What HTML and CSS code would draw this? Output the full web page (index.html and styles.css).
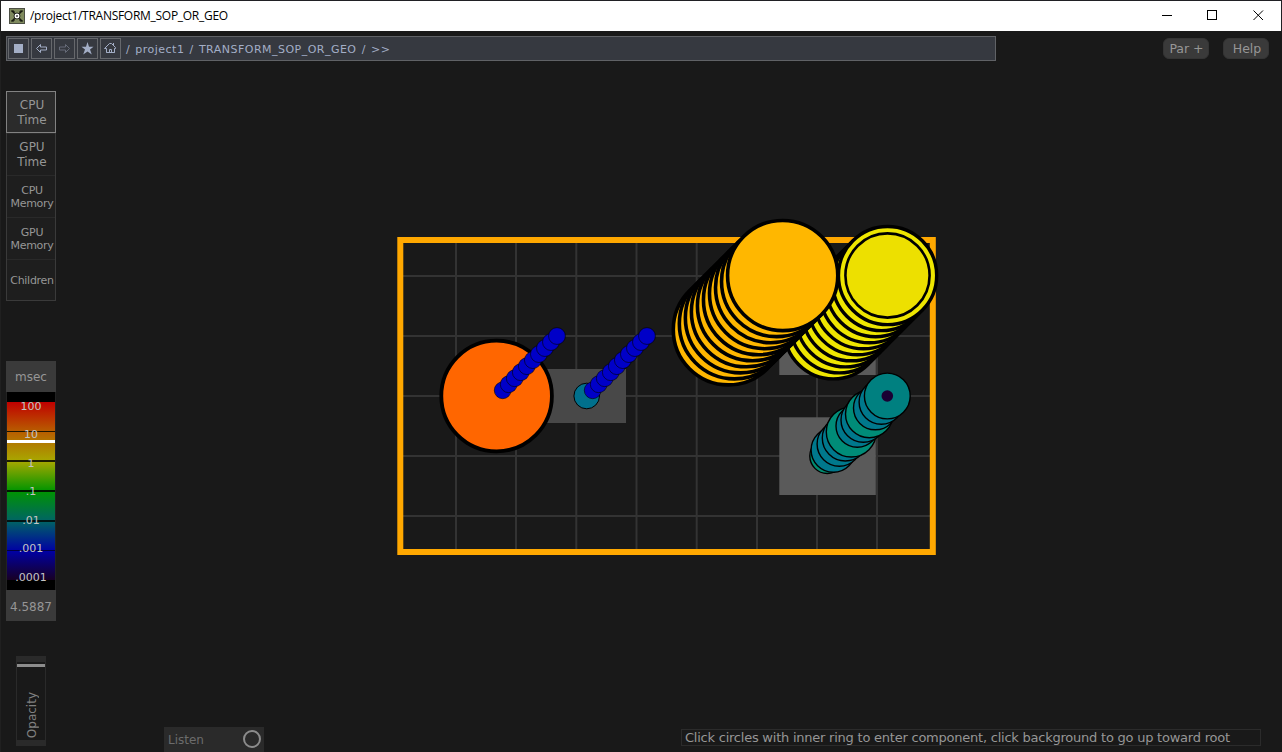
FILE: index.html
```html
<!DOCTYPE html>
<html lang="en">
<head>
    <meta charset="UTF-8">
    <title>/project1/TRANSFORM_SOP_OR_GEO</title>
    <link rel="stylesheet" href="styles.css">
</head>
<body>
    <header class="titlebar">
        <svg class="app-icon" width="16" height="16" viewBox="0 0 16 16">
            <rect x="0.5" y="0.5" width="15" height="15" fill="#7f8a5e" stroke="#4c4f44"/>
            <path d="M3 3l10 10M13 3L3 13" stroke="#14160f" stroke-width="1.4"/>
            <path d="M2 3h3v2M14 3h-3v2M2 13h3v-2M14 13h-3v-2" fill="none" stroke="#14160f"/>
            <circle cx="8" cy="8" r="3" fill="#fff" stroke="#2a2c24"/>
            <circle cx="8" cy="8" r="1" fill="#444"/>
        </svg>
        <span class="title">/project1/TRANSFORM_SOP_OR_GEO</span>
        <svg class="window-buttons" width="106" height="12" viewBox="0 0 106 12" fill="none" stroke="#000">
            <path d="M0 5.500h10"/>
            <rect x="45.5" y="0.5" width="9" height="9"/>
            <path d="M91.500 0.500l9.500 9.500M101 0.500l-9.500 9.500"/>
        </svg>
    </header>

    <div class="toolbar">
        <div class="pathbar">
            <button class="tool"><svg width="19" height="19" viewBox="0 0 19 19"><rect x="5" y="5" width="9" height="9" fill="#a3aec6"/></svg></button>
            <button class="tool"><svg width="19" height="19" viewBox="0 0 19 19"><path d="M4.500 9.500l4-4v2.500h6v3h-6v2.500z" fill="none" stroke="#a3aec6"/></svg></button>
            <button class="tool"><svg width="19" height="19" viewBox="0 0 19 19"><path d="M14.500 9.500l-4-4v2.500h-6v3h6v2.500z" fill="none" stroke="#666b78"/></svg></button>
            <button class="tool"><svg width="19" height="19" viewBox="0 0 19 19"><path d="M9.500 3l1.500 4.800h4.500l-3.500 2.700 1.800 5-4.300-3-4.300 3 1.800-5-3.500-2.700h4.500z" fill="#a3aec6"/></svg></button>
            <button class="tool"><svg width="19" height="19" viewBox="0 0 19 19"><path d="M3.500 9.500l5-5h2l4 4v1h-1v4h-3v-3h-2v3h-3v-4zM12.500 4v3M5.500 13.500h8" fill="none" stroke="#a3aec6"/></svg></button>
            <span class="path">/ project1 / TRANSFORM_SOP_OR_GEO / &gt;&gt;</span>
        </div>
        <button class="pill">Par +</button>
        <button class="pill help">Help</button>
    </div>

    <div class="main">
        <aside class="sidebar">
            <div class="modes">
                <div class="mode active">CPU<br>Time</div>
                <div class="mode">GPU<br>Time</div>
                <div class="mode small">CPU<br>Memory</div>
                <div class="mode small">GPU<br>Memory</div>
                <div class="mode small">Children</div>
            </div>
            <div class="legend">
                <div class="unit">msec</div>
                <div class="scale">
                    <span>100</span>
                    <span>10</span>
                    <span>1</span>
                    <span>.1</span>
                    <span>.01</span>
                    <span>.001</span>
                    <span>.0001</span>
                    <div class="marker"></div>
                </div>
                <div class="value">4.5887</div>
            </div>
            <div class="opacity"><span>Opacity</span></div>
        </aside>

        <section class="content">
            <svg class="graph" width="556" height="350" viewBox="390 210 556 350">
                <path class="grid" d="M456 243v306M516 243v306M576.300 243v306M636.500 243v306M696.700 243v306M757 243v306M817 243v306M877 243v306M403 276h527M403 336h527M403 396h527M403 456h527M403 516h527"/>
                <rect class="frame" x="400.300" y="240" width="532.500" height="312"/>
                <rect x="530" y="369" width="96" height="54" fill="#484848"/>
                <rect x="779.300" y="350" width="96.500" height="25" fill="#5a5a5a"/>
                <rect x="779.300" y="417.300" width="96.500" height="77.700" fill="#5a5a5a"/>
                <g id="nodes"></g>
            </svg>
            <footer class="bottom">
                <div class="listen"><span>Listen</span><i class="knob"></i></div>
                <div class="status"><span>Click circles with inner ring to enter component, click background to go up toward root</span></div>
            </footer>
        </section>
    </div>

    <script>
        const nodes = document.getElementById('nodes');

        function circle(x, y, r, fill, line) {
            const c = document.createElementNS('http://www.w3.org/2000/svg', 'circle');
            c.setAttribute('cx', x);
            c.setAttribute('cy', y);
            c.setAttribute('r', r);
            c.setAttribute('fill', fill);
            c.setAttribute('stroke', '#000');
            c.setAttribute('stroke-width', line);
            nodes.appendChild(c);
        }

        // ten circles going up and to the right
        function stack(x, y, r, fill, line) {
            for (let i = 0; i < 10; i++) {
                circle(x + i * 6.03, y - i * 6.03, r, fill, line);
            }
        }

        circle(496.6, 396, 55.3, '#ff6600', 3.8);
        circle(586.7, 396, 12.8, '#00708c', 1);
        stack(502.7, 390.3, 8.4, '#0000c8', 0.6);
        stack(592.7, 390.3, 8.4, '#0000c8', 0.6);

        stack(833.3, 329.8, 49.1, '#eee600', 3.4);
        circle(887.5, 275.5, 42.1, '#ede000', 2.6);
        stack(728.4, 329.8, 55.1, '#ffb700', 3.6);

        const chain = [
            [17.5, '#008c70'], [22.2, '#00788c'], [22.2, '#00788c'], [23, '#00788c'],
            [25, '#008c78'], [21.3, '#00788c'], [22.3, '#00788c'], [23.8, '#008c78'],
            [21.8, '#00788c'], [22.2, '#00788c'], [22.9, '#008080']
        ];
        chain.forEach((item, i) => {
            circle(827.3 + i * 6, 456 - i * 6, item[0], item[1], 1.4);
        });
        circle(887.3, 396, 5.8, '#1a0033', 0);
    </script>
</body>
</html>
```
FILE: styles.css
```css
* {
    box-sizing: border-box;
}
body {
    margin: 0;
    height: 752px;
    overflow: hidden;
    background: #191919;
    color: #969696;
    font-family: 'DejaVu Sans', Verdana, sans-serif;
    font-size: 12px;
    border-left: 1px solid #202020;
    display: flex;
    flex-direction: column;
}
button {
    font-family: inherit;
    padding: 0;
}
svg {
    display: block;
}
.titlebar {
    height: 31px;
    background: #fff;
    border-top: 1px solid #202024;
    border-right: 1px solid #202024;
    display: flex;
    align-items: center;
    padding: 0 13px 1px 8px;
    color: #000;
    flex: none;
}
.title {
    font-family: 'Open Sans', 'Noto Sans', sans-serif;
    font-size: 12px;
    letter-spacing: -0.28px;
    margin-left: 5px;
    flex: 1;
}
.toolbar {
    height: 30px;
    padding: 5px 13px 0 5px;
    display: flex;
    flex: none;
}
.pathbar {
    width: 990px;
    height: 25px;
    background: #363940;
    border: 1px solid #606266;
    display: flex;
    align-items: center;
    gap: 2px;
    padding-left: 1px;
    color: #a3aec6;
    margin-right: auto;
}
.tool {
    width: 21px;
    height: 21px;
    background: #363940;
    border: 1px solid #66686c;
}
.path {
    font-size: 11px;
    letter-spacing: 0.48px;
    word-spacing: 1.2px;
    margin-left: 3px;
    padding-top: 1px;
    white-space: pre;
}
.pill {
    width: 46px;
    height: 21px;
    margin: 2px 0 0 14px;
    padding-left: 1px;
    border: 1px solid #343434;
    border-radius: 6px;
    background: #3a3a3a;
    color: #969696;
    font-size: 12.5px;
}
.help {
    padding-left: 2px;
}
.main {
    flex: 1;
    display: flex;
    padding-top: 30px;
}
.sidebar {
    width: 50px;
    margin-left: 5px;
    text-align: center;
    flex: none;
}
.modes {
    border: 1px solid #3a3a3a;
    height: 210px;
    background: #1e1e1e;
}
.mode {
    height: 42px;
    line-height: 15px;
    display: flex;
    align-items: center;
    justify-content: center;
    border-top: 1px solid #292929;
    padding-left: 2px;
}
.mode.active {
    background: #2b2b2b;
    border: 1px solid #828282;
    margin: -1px -1px 0;
    padding-top: 2px;
}
.mode.small {
    font-size: 11px;
    letter-spacing: -0.3px;
    line-height: 13px;
}
.legend {
    margin-top: 60px;
    height: 260px;
}
.unit, .value {
    height: 31px;
    line-height: 32px;
    background: #3a3a3a;
}
.value {
    line-height: 34px;
}
.scale {
    position: relative;
    height: 198px;
    border: solid #222;
    border-width: 0 1px;
    color: #c4c4c4;
    font-size: 11px;
    display: flex;
    flex-direction: column;
    background:
        linear-gradient(#1c1400, #1c1400) 0 39px / 100% 1px no-repeat,
        linear-gradient(#1c1c00, #1c1c00) 0 68px / 100% 2px no-repeat,
        linear-gradient(#001800, #001800) 0 98px / 100% 2px no-repeat,
        linear-gradient(#001414, #001414) 0 128px / 100% 2px no-repeat,
        linear-gradient(#000040, #000040) 0 158px / 100% 1px no-repeat,
        linear-gradient(#000 10px, #c00000 10px, #b85c00 39px, #a8a800 69px, #009400 99px, #006464 129px, #0000a4 159px, #180024 188px, #000 188px);
}
.scale span {
    flex: none;
    height: 28.5px;
    display: flex;
    align-items: center;
    justify-content: center;
}
.marker {
    position: absolute;
    left: 0;
    right: 0;
    top: 48px;
    height: 3px;
    background: #fff;
}
.opacity {
    width: 30px;
    height: 90px;
    margin: 35px 0 0 10px;
    border: 1px solid #2a2a2a;
    border-width: 6px 1px;
    color: #808080;
    background: linear-gradient(#8c8c8c, #8c8c8c) 0 2px / 100% 3px no-repeat #191919;
    display: flex;
    align-items: flex-end;
    justify-content: center;
}
.opacity span {
    writing-mode: vertical-rl;
    transform: rotate(180deg);
    margin: 0 0 2px 2px;
}
.content {
    flex: 1;
    display: flex;
    flex-direction: column;
    padding-top: 119px;
}
.graph {
    margin-left: 334px;
}
.grid {
    fill: none;
    stroke: #333;
    stroke-width: 2;
}
.frame {
    fill: none;
    stroke: #ffa800;
    stroke-width: 6;
}
.bottom {
    margin: auto 21px 0 108px;
    height: 25px;
    display: flex;
    justify-content: space-between;
}
.listen {
    width: 100px;
    height: 25px;
    padding: 0 3px 0 4px;
    background: #2a2a2a;
    color: #6c6c6c;
    display: flex;
    align-items: center;
    justify-content: space-between;
}
.knob {
    width: 18px;
    height: 18px;
    margin-top: -1px;
    border: 2px solid #8c8c8c;
    border-radius: 50%;
}
.status {
    width: 580px;
    height: 17px;
    margin-top: 2px;
    padding-left: 3px;
    border: 1px solid #2b2b2b;
    font-size: 13px;
    line-height: 16px;
    letter-spacing: -0.23px;
    white-space: nowrap;
}
```
